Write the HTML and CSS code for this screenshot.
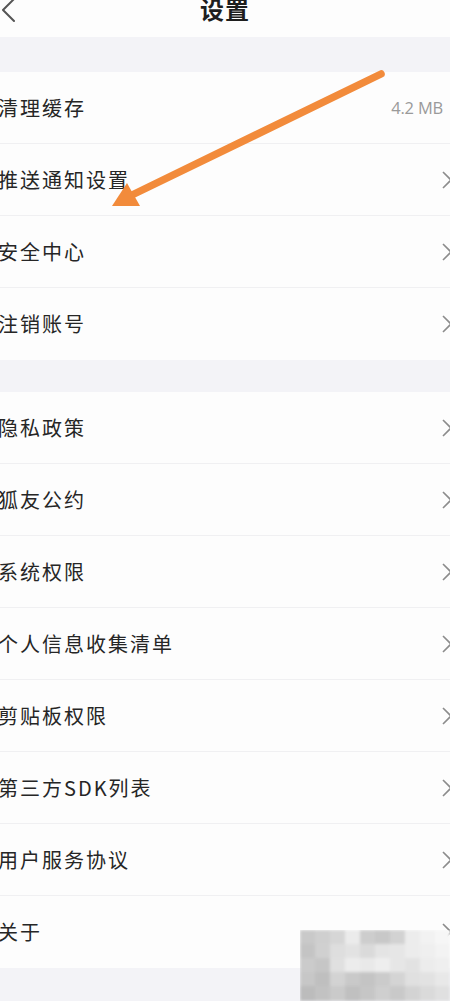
FILE: index.html
```html
<!DOCTYPE html>
<html lang="zh-CN">
<head>
<meta charset="utf-8">
<title>设置</title>
<link rel="stylesheet" href="styles.css">
</head>
<body>
<div class="page">
  <header class="header">
    <svg class="back" width="18" height="24" viewBox="0 0 18 24"><polyline points="14,-1 3,10 14,21" fill="none" stroke="#555" stroke-width="2" stroke-linecap="round" stroke-linejoin="round"/></svg>
    <h1 class="title">设置</h1>
    <span class="spacer"></span>
  </header>
  <div class="band band-top"></div>
  <section class="group">
    <div class="row"><span class="label">清理缓存</span><span class="value">4.2 MB</span></div>
    <div class="row"><span class="label">推送通知设置</span><svg class="chev" width="12" height="18" viewBox="0 0 12 18"><polyline points="2,1 10,9 2,17" fill="none" stroke="#8c8c8c" stroke-width="1.6"/></svg></div>
    <div class="row"><span class="label">安全中心</span><svg class="chev" width="12" height="18" viewBox="0 0 12 18"><polyline points="2,1 10,9 2,17" fill="none" stroke="#8c8c8c" stroke-width="1.6"/></svg></div>
    <div class="row"><span class="label">注销账号</span><svg class="chev" width="12" height="18" viewBox="0 0 12 18"><polyline points="2,1 10,9 2,17" fill="none" stroke="#8c8c8c" stroke-width="1.6"/></svg></div>
  </section>
  <div class="band band-mid"></div>
  <section class="group">
    <div class="row"><span class="label">隐私政策</span><svg class="chev" width="12" height="18" viewBox="0 0 12 18"><polyline points="2,1 10,9 2,17" fill="none" stroke="#8c8c8c" stroke-width="1.6"/></svg></div>
    <div class="row"><span class="label">狐友公约</span><svg class="chev" width="12" height="18" viewBox="0 0 12 18"><polyline points="2,1 10,9 2,17" fill="none" stroke="#8c8c8c" stroke-width="1.6"/></svg></div>
    <div class="row"><span class="label">系统权限</span><svg class="chev" width="12" height="18" viewBox="0 0 12 18"><polyline points="2,1 10,9 2,17" fill="none" stroke="#8c8c8c" stroke-width="1.6"/></svg></div>
    <div class="row"><span class="label">个人信息收集清单</span><svg class="chev" width="12" height="18" viewBox="0 0 12 18"><polyline points="2,1 10,9 2,17" fill="none" stroke="#8c8c8c" stroke-width="1.6"/></svg></div>
    <div class="row"><span class="label">剪贴板权限</span><svg class="chev" width="12" height="18" viewBox="0 0 12 18"><polyline points="2,1 10,9 2,17" fill="none" stroke="#8c8c8c" stroke-width="1.6"/></svg></div>
    <div class="row"><span class="label">第三方SDK列表</span><svg class="chev" width="12" height="18" viewBox="0 0 12 18"><polyline points="2,1 10,9 2,17" fill="none" stroke="#8c8c8c" stroke-width="1.6"/></svg></div>
    <div class="row"><span class="label">用户服务协议</span><svg class="chev" width="12" height="18" viewBox="0 0 12 18"><polyline points="2,1 10,9 2,17" fill="none" stroke="#8c8c8c" stroke-width="1.6"/></svg></div>
    <div class="row"><span class="label">关于</span><svg class="chev" width="12" height="18" viewBox="0 0 12 18"><polyline points="2,1 10,9 2,17" fill="none" stroke="#8c8c8c" stroke-width="1.6"/></svg></div>
  </section>
  <div class="band band-bottom"></div>

  <svg class="annot-arrow" width="450" height="240" viewBox="0 0 450 240">
    <line x1="381" y1="74" x2="132" y2="195" stroke="#f28b3b" stroke-width="7.5" stroke-linecap="round"/>
    <polygon points="112,206 127,183 140,206" fill="#f28b3b"/>
  </svg>

  <svg class="mosaic" width="150" height="71" viewBox="0 0 150 71">
    <defs><filter id="b" x="-10%" y="-10%" width="120%" height="120%"><feGaussianBlur stdDeviation="1.6"/></filter></defs>
    <g filter="url(#b)">
      <rect x="0" y="0" width="150" height="71" fill="#e4e4e4"/>
      <rect x="0" y="0" width="15" height="14" fill="#c9c9c9"/>
      <rect x="15" y="0" width="15" height="14" fill="#cfcfcf"/>
      <rect x="30" y="0" width="15" height="14" fill="#d6d6d6"/>
      <rect x="45" y="0" width="15" height="14" fill="#ebebeb"/>
      <rect x="60" y="0" width="15" height="14" fill="#cdcdcd"/>
      <rect x="75" y="0" width="15" height="14" fill="#c8c8c8"/>
      <rect x="90" y="0" width="15" height="14" fill="#d2d2d2"/>
      <rect x="105" y="0" width="15" height="14" fill="#ececec"/>
      <rect x="120" y="0" width="15" height="14" fill="#f2f2f2"/>
      <rect x="135" y="0" width="15" height="14" fill="#f6f6f6"/>
      <rect x="0" y="14" width="15" height="14" fill="#c4c4c4"/>
      <rect x="15" y="14" width="15" height="14" fill="#d0d0d0"/>
      <rect x="30" y="14" width="15" height="14" fill="#dedede"/>
      <rect x="45" y="14" width="15" height="14" fill="#e2e2e2"/>
      <rect x="60" y="14" width="15" height="14" fill="#dadada"/>
      <rect x="75" y="14" width="15" height="14" fill="#e4e4e4"/>
      <rect x="90" y="14" width="15" height="14" fill="#e6e6e6"/>
      <rect x="105" y="14" width="15" height="14" fill="#ececec"/>
      <rect x="120" y="14" width="15" height="14" fill="#efefef"/>
      <rect x="135" y="14" width="15" height="14" fill="#f3f3f3"/>
      <rect x="0" y="28" width="15" height="14" fill="#cbcbcb"/>
      <rect x="15" y="28" width="15" height="14" fill="#c6c6c6"/>
      <rect x="30" y="28" width="15" height="14" fill="#e0e0e0"/>
      <rect x="45" y="28" width="15" height="14" fill="#ececec"/>
      <rect x="60" y="28" width="15" height="14" fill="#e9e9e9"/>
      <rect x="75" y="28" width="15" height="14" fill="#eeeeee"/>
      <rect x="90" y="28" width="15" height="14" fill="#e6e6e6"/>
      <rect x="105" y="28" width="15" height="14" fill="#e2e2e2"/>
      <rect x="120" y="28" width="15" height="14" fill="#ececec"/>
      <rect x="135" y="28" width="15" height="14" fill="#efefef"/>
      <rect x="0" y="42" width="15" height="14" fill="#c7c7c7"/>
      <rect x="15" y="42" width="15" height="14" fill="#bfbfbf"/>
      <rect x="30" y="42" width="15" height="14" fill="#d3d3d3"/>
      <rect x="45" y="42" width="15" height="14" fill="#c9c9c9"/>
      <rect x="60" y="42" width="15" height="14" fill="#c4c4c4"/>
      <rect x="75" y="42" width="15" height="14" fill="#cbcbcb"/>
      <rect x="90" y="42" width="15" height="14" fill="#d4d4d4"/>
      <rect x="105" y="42" width="15" height="14" fill="#e0e0e0"/>
      <rect x="120" y="42" width="15" height="14" fill="#e2e2e2"/>
      <rect x="135" y="42" width="15" height="14" fill="#e8e8e8"/>
      <rect x="0" y="56" width="15" height="15" fill="#bcbcbc"/>
      <rect x="15" y="56" width="15" height="15" fill="#c2c2c2"/>
      <rect x="30" y="56" width="15" height="15" fill="#cacaca"/>
      <rect x="45" y="56" width="15" height="15" fill="#c0c0c0"/>
      <rect x="60" y="56" width="15" height="15" fill="#c6c6c6"/>
      <rect x="75" y="56" width="15" height="15" fill="#cfcfcf"/>
      <rect x="90" y="56" width="15" height="15" fill="#c9c9c9"/>
      <rect x="105" y="56" width="15" height="15" fill="#d3d3d3"/>
      <rect x="120" y="56" width="15" height="15" fill="#dadada"/>
      <rect x="135" y="56" width="15" height="15" fill="#e0e0e0"/>
    </g>
  </svg>
</div>
</body>
</html>
```

FILE: styles.css
```css
html, body {
  margin: 0;
  padding: 0;
}
body {
  width: 450px;
  height: 1001px;
  overflow: hidden;
  background: #f3f3f7;
  font-family: "Noto Sans CJK SC", "Noto Sans", sans-serif;
}
.page {
  position: relative;
  width: 450px;
  height: 1001px;
  overflow: hidden;
}
.header {
  height: 37px;
  background: #fdfdfd;
  display: grid;
  grid-template-columns: 1fr auto 1fr;
  align-items: start;
}
.back {
  overflow: visible;
}
.title {
  margin: -3px 0 0;
  font-size: 24px;
  line-height: 24px;
  font-weight: 700;
  color: #1e1e1e;
  letter-spacing: 1px;
}
.band-top {
  height: 35px;
}
.band-mid {
  height: 32px;
}
.band-bottom {
  height: 40px;
}
.group {
  background: #fdfdfd;
}
.row {
  height: 72px;
  box-sizing: border-box;
  display: flex;
  align-items: center;
  justify-content: space-between;
  border-bottom: 1px solid #f0f0f2;
}
.row:last-child {
  border-bottom: none;
}
.label {
  margin-left: -2px;
  font-size: 20px;
  letter-spacing: 2px;
  color: #262626;
  line-height: 1;
}
.value {
  margin-right: 7px;
  font-family: "Open Sans", "Noto Sans", sans-serif;
  font-size: 16.5px;
  color: #9a9a9a;
  letter-spacing: -0.2px;
}
.chev {
  margin-right: -3px;
  flex: none;
}
.annot-arrow {
  position: absolute;
  left: 0;
  top: 0;
  pointer-events: none;
}
.mosaic {
  position: absolute;
  left: 300px;
  top: 930px;
}
```
